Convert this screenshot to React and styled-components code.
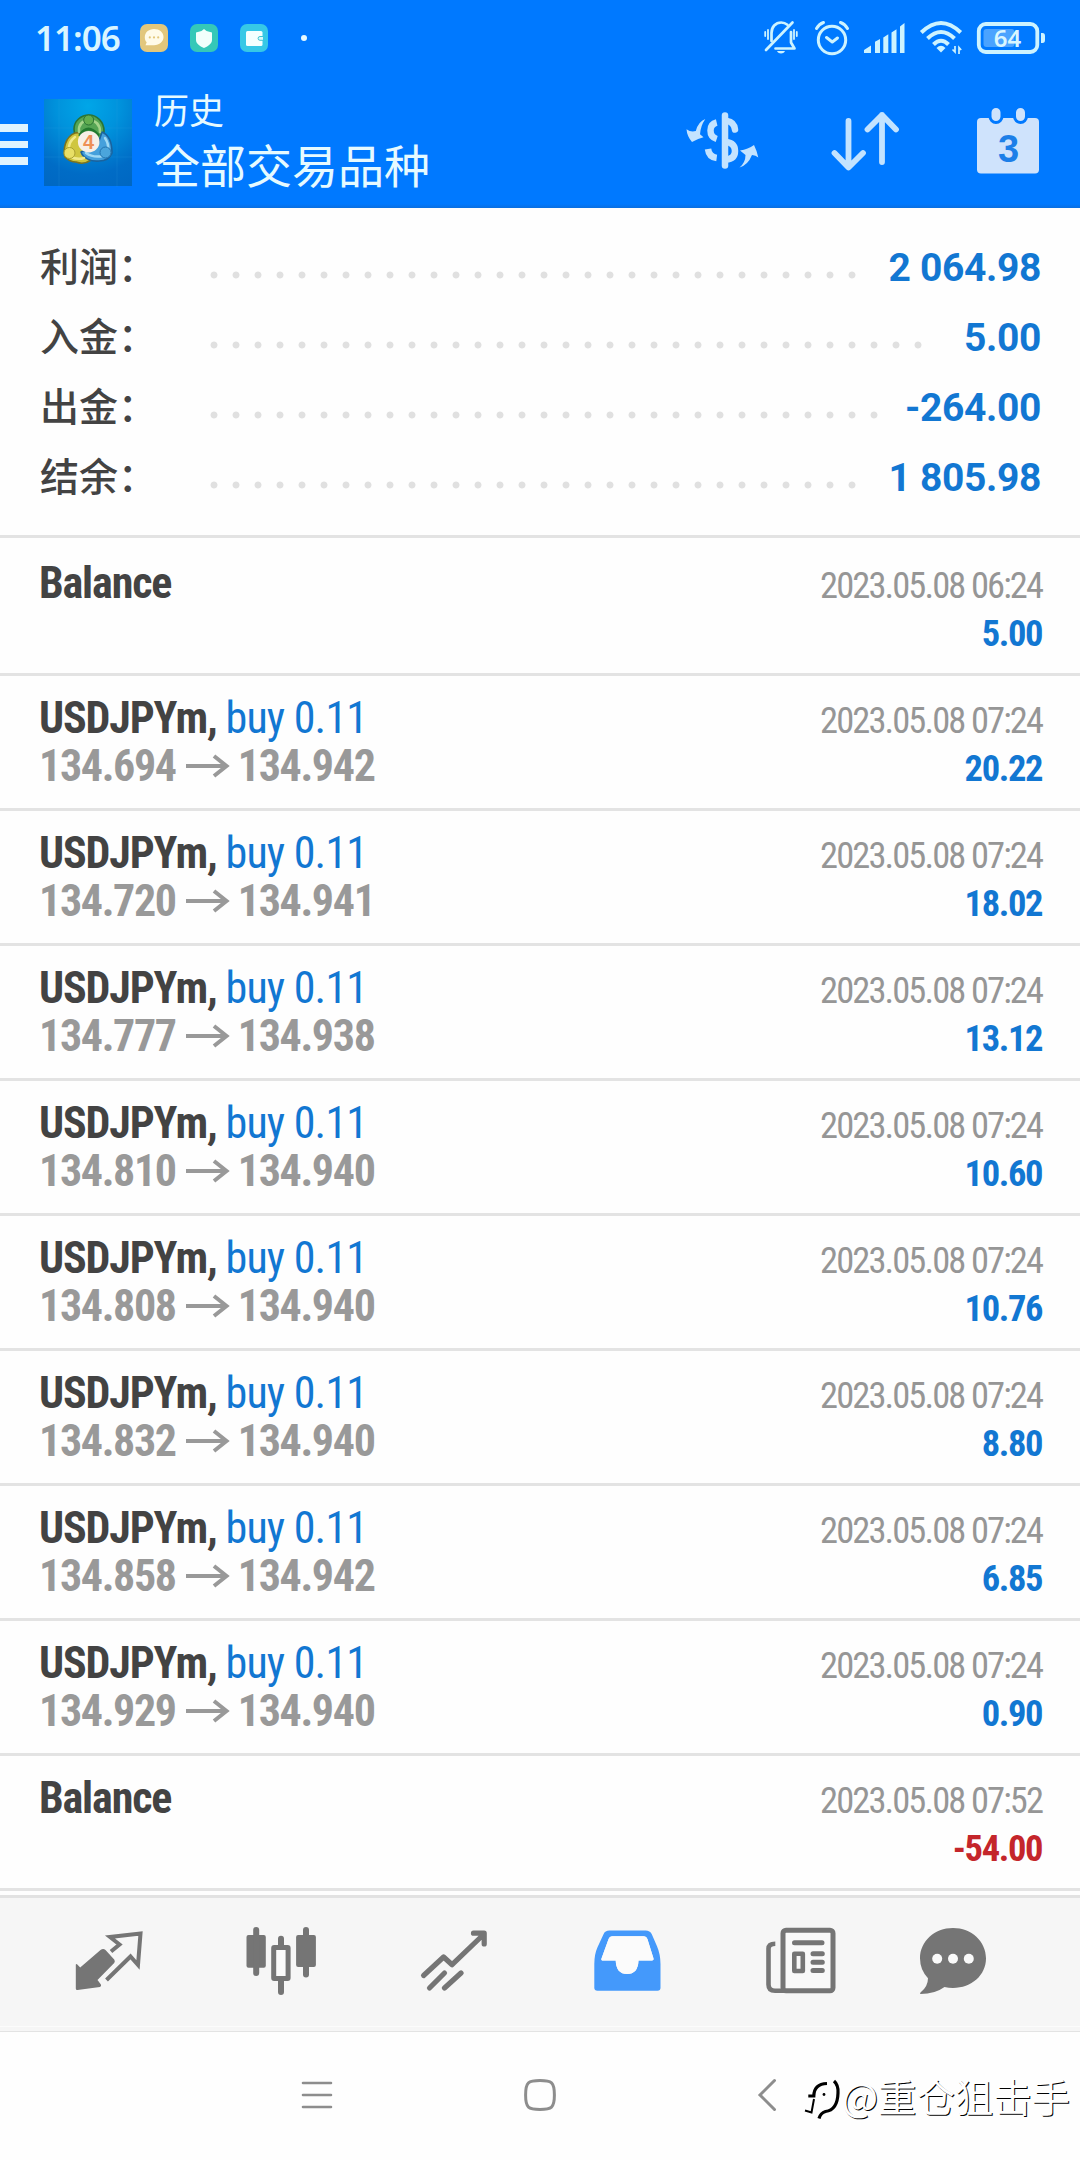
import React from 'react';
import styled, { createGlobalStyle, css } from 'styled-components';

const ROBOTO = "Roboto, 'Noto Sans CJK SC', sans-serif";
const CJK = "'Noto Sans CJK SC', sans-serif";

const Global = createGlobalStyle`
  * { box-sizing: border-box; }
  body { margin: 0; background: #fdfdfd; font-family: ${ROBOTO}; }
  svg { display: block; overflow: visible; flex: none; }
`;

const Screen = styled.div`
  position: relative;
  width: 1080px;
  height: 2160px;
  overflow: hidden;
  display: flex;
  flex-direction: column;
  background: #fefefe;
`;

const Header = styled.header`
  height: 208px;
  flex: none;
  background: linear-gradient(#0079ff 204px, #0a6fe0 208px);
  color: #e6faff;
`;

const StatusBar = styled.div`
  height: 76px;
  padding: 0 34px 0 35px;
  display: flex;
  align-items: center;
  justify-content: space-between;
`;

const Clock = styled.span`
  width: 105px;
  font: 600 35px/76px 'Noto Sans', sans-serif;
  letter-spacing: -1px;
  color: #d9f5ff;
  white-space: nowrap;
`;

const StatusGroup = styled.div`
  display: flex;
  align-items: center;
  gap: ${(p) => p.$gap || 0}px;
`;

const Badge = styled.span`
  width: 28px;
  height: 28px;
  border-radius: 7px;
  display: grid;
  place-items: center;
  background: ${(p) => p.$color};
`;

const MoreDot = styled.span`
  width: 6px;
  height: 6px;
  margin-left: 11px;
  border-radius: 50%;
  background: #e6faff;
`;

const AppBar = styled.div`
  height: 132px;
  display: flex;
  align-items: flex-start;
`;

const MenuButton = styled.div`
  width: 28px;
  margin: 48px 16px 0 0;
  display: flex;
  flex-direction: column;
  gap: 9px;
`;

const MenuBar = styled.span`
  height: 7.5px;
  background: #dff3ff;
`;

const Logo = styled.div`
  width: 88px;
  height: 87px;
  margin-top: 23px;
  background: radial-gradient(circle at 50% 8%, #00a6e8 0, #0092dc 35%, #006cc6 75%, #0067c2 100%);
`;

const Titles = styled.div`
  margin: 10px 0 0 22px;
  display: flex;
  flex-direction: column;
  font-family: ${CJK};
  white-space: nowrap;
`;

const Title = styled.span`
  font-size: 35px;
  line-height: 46px;
`;

const Subtitle = styled.span`
  font-size: 46px;
  line-height: 63px;
`;

const Actions = styled.div`
  margin-left: auto;
  padding: 36px 41px 0 0;
  display: flex;
  align-items: flex-start;
  color: #c3e3ff;
  & > svg + svg { margin-left: 74px; }
  & > svg:last-child { margin: -4px 0 0 78px; }
`;

const Summary = styled.section`
  height: 330px;
  flex: none;
  padding: 25px 39px 0 40px;
  border-bottom: 3px solid #e3e3e3;
`;

const SummaryRow = styled.div`
  height: 70px;
  display: flex;
  align-items: center;
`;

const SummaryLabel = styled.span`
  width: 162.7px;
  padding-bottom: 8px;
  font: 500 39px/62px ${CJK};
  color: #434343;
  white-space: nowrap;
`;

const Leader = styled.span`
  flex: 1;
  height: 22px;
  margin: 13px 17px 0 0;
  &::before {
    content: '';
    display: block;
    height: 22px;
    width: round(down, 100%, 22px);
    background: radial-gradient(circle, #e0e0e0 3px, transparent 3.9px) 0 0 / 22px 22px repeat-x;
  }
`;

const SummaryValue = styled.span`
  font: 700 39px/70px ${ROBOTO};
  letter-spacing: -0.35px;
  color: #1277d2;
  white-space: pre;
`;

const Deals = styled.section`
  flex: none;
  padding-top: 3px;
`;

const Deal = styled.article`
  height: 135px;
  padding: 18px 38px 0 39px;
  display: flex;
  justify-content: space-between;
  border-bottom: 3px solid #e3e3e3;
`;

const DealSide = styled.div`
  display: flex;
  flex-direction: column;
  ${(p) =>
    p.$end &&
    css`
      align-items: flex-end;
      padding-top: 3px;
    `}
`;

const Line = styled.div`
  height: 48px;
  display: flex;
  align-items: center;
  font: ${(p) => p.$weight || 700} ${(p) => p.$size || 44}px/48px ${ROBOTO};
  font-stretch: 75%;
  letter-spacing: ${(p) => p.$tracking || -1.15}px;
  color: ${(p) => p.$color || '#434343'};
  white-space: pre;
`;

const Side = styled.span`
  font-weight: 400;
  letter-spacing: -0.8px;
  color: #1277d2;
`;

const ArrowSlot = styled.span`
  width: 62px;
  padding-left: 1px;
  display: grid;
  place-items: center;
`;

const TabBar = styled.nav`
  height: 132px;
  margin-top: 4px;
  flex: none;
  padding: 0 0 0 22px;
  display: flex;
  border-top: 3px solid #e2e2e2;
  border-bottom: 1px solid #fcfcfc;
  background: #f6f6f6;
`;

const Tab = styled.div`
  width: ${(p) => p.$width || 173}px;
  height: 126px;
  display: grid;
  place-items: center;
  color: ${(p) => (p.$active ? '#4499fb' : '#757575')};
`;

const SystemBar = styled.footer`
  height: 133px;
  flex: none;
  display: flex;
  align-items: center;
  padding: 0 0 2px 302px;
  border-top: 4px solid #f6f6f6;
  box-shadow: inset 0 1px #e3e3e3;
  color: #8d8d8d;
`;

const SystemKey = styled.div`
  margin-right: ${(p) => p.$gap || 0}px;
`;

const Watermark = styled.div`
  position: absolute;
  right: 10px;
  bottom: 37px;
  display: flex;
  align-items: center;
  gap: 2px;
  font: 400 38.4px/56px ${CJK};
  color: #fff;
  text-shadow: 1px 1px 0 #000;
  white-space: nowrap;
  & > svg { margin-top: 12px; }
`;

const ChatBadgeIcon = () => (
  <svg width="20" height="18" viewBox="0 0 20 18">
    <path d="M10 0c5.500 0 9.500 3.400 9.500 8s-4 8.200-9.500 8.200H1.500l1.200-3C1.300 11.800.8 10 .8 8.200.8 3.600 4.600 0 10 0z" fill="#fffbe8" />
    <g fill="#e2c77c"><circle cx="5.800" cy="8.400" r="1.100" /><circle cx="10" cy="8.400" r="1.100" /><circle cx="14.200" cy="8.400" r="1.100" /></g>
  </svg>
);

const ShieldBadgeIcon = () => (
  <svg width="16" height="19" viewBox="0 0 16 19">
    <path d="M8 0l2.500 2L16 3.500V11c0 3.500-3.500 6-8 8-4.500-2-8-4.500-8-8V3.500L5.500 2z" fill="#f1fffc" />
  </svg>
);

const WalletBadgeIcon = () => (
  <svg width="17" height="15" viewBox="0 0 17 15">
    <rect width="16.500" height="15" rx="1.500" fill="#f4ffff" />
    <path d="M17 5.500h-3a1.900 1.900 0 0 0 0 3.800h3" fill="#d8f8fb" stroke="#3fc4d2" strokeWidth="1" />
  </svg>
);

const MutedBellIcon = () => (
  <svg width="36" height="34" viewBox="0 0 36 34" fill="none" stroke="#cdf3ff" strokeWidth="2.700" strokeLinecap="round" strokeLinejoin="round">
    <path d="M7.500 20V12c0-6 4-10.500 9.700-10.500 2.500 0 4.500.8 6.200 2.200" />
    <path d="M11.500 27.500h19l-3.500-6V11" />
    <path d="M2 29L28.500 1.500" />
    <path d="M1.200 11v4M4 9v9M30 9v9M32.800 11v4" strokeWidth="1.800" />
    <path d="M13 30h8c-1 1.800-2.300 2.500-4 2.500s-3-.7-4-2.500z" fill="#cdf3ff" stroke="none" />
  </svg>
);

const AlarmIcon = () => (
  <svg width="34" height="34" viewBox="0 0 34 34" fill="none" stroke="#cdf3ff" strokeWidth="3" strokeLinecap="round" strokeLinejoin="round">
    <circle cx="17" cy="19" r="13.700" />
    <path d="M11.500 16.500l5.800 4.500 5.200-4M1.500 7.500Q4 3 8.500 1.500M32.500 7.500Q30 3 25.500 1.500" />
  </svg>
);

const SignalIcon = () => (
  <svg width="41" height="30" viewBox="0 0 41 30" fill="#cdf3ff">
    <path d="M0 30v-3l7-4.500V30zM11 30V18.800l5-2.900V30zM19.300 30V14.500l5-3.200V30zM27.500 30V9.500l5-3.200V30zM36 30V3.500L40.500 0v30z" />
  </svg>
);

const WifiIcon = () => (
  <svg width="42" height="34" viewBox="0 0 42 34" fill="none" stroke="#cdf3ff" strokeWidth="4">
    <path d="M1.300 11.500Q21-7.500 40.700 11.500M7.500 17.500Q21 4.500 34.500 17.500M13.500 23.500q7.500-7.500 15 0" />
    <path d="M16.500 27q4.500-4.500 9 0L21 31.500z" fill="#cdf3ff" stroke="none" />
    <path d="M35 25v6l-2.500-2.500M39 33v-6.500l2.200 2.500" strokeWidth="1.700" />
  </svg>
);

const BatteryIcon = () => (
  <svg width="69" height="32" viewBox="0 0 69 32">
    <rect x="1.800" y="2" width="58.500" height="28" rx="7" fill="none" stroke="#cdf3ff" strokeWidth="3.800" />
    <rect x="6.500" y="7" width="31" height="18" rx="3" fill="#4ba3ff" />
    <path d="M64 11h1.500q2.500 0 2.500 3v4q0 3-2.500 3H64z" fill="#cdf3ff" />
    <text x="30.500" y="24.500" textAnchor="middle" fontFamily="Noto Sans, sans-serif" fontWeight="600" fontSize="24" fill="#d9f6ff">64</text>
  </svg>
);

const TradingLogo = () => (
  <svg width="88" height="88" viewBox="0 0 88 88">
    <path d="M0 29h88M0 58h88M15 0v88M73 0v88" stroke="#38a6df" strokeOpacity=".16" />
    <g strokeLinejoin="round" strokeWidth="1.600">
      <path d="M45 16c8 0 15 7 15 16 0 6-3 10-6 12L37 43c-4-3-7-7-7-13 0-8 7-14 15-14z" fill="#55a554" stroke="#2a7434" />
      <path d="M31 34c4-1 7 0 9 3l7 24c-4 3-10 4-15 2-3 0-8-2-11-5-2-8 0-20 10-24z" fill="#cfc63f" stroke="#7b7420" />
      <path d="M58 33c7 3 10 11 10 21-2 5-7 8-13 8-8 1-16-3-18-9l17-8z" fill="#45a0dc" stroke="#1a639e" />
    </g>
    <g fill="none" strokeLinecap="round" strokeWidth="2.500">
      <path d="M35 33q-1-11 10-12 11 1 11 12" stroke="#a4d48a" />
      <path d="M31 38q-7 5-6 13M27 58q7 3 13 1" stroke="#f0e98a" />
      <path d="M61 39q4 6 3 12M59 57q-10 2-17-3" stroke="#9fd9f5" />
      <path d="M36 36q8-12 18 0" stroke="#23792f" strokeWidth="3" />
    </g>
    <circle cx="44.700" cy="21" r="5" fill="#62ae50" stroke="#2b7336" />
    <circle cx="25.500" cy="54" r="5.500" fill="#e8df66" stroke="#aaa030" />
    <circle cx="61.500" cy="53.500" r="5.500" fill="#4ba5dc" stroke="#2374b0" />
    <circle cx="44.700" cy="42.700" r="10.800" fill="#f7efe6" />
    <text x="44.500" y="50" textAnchor="middle" fontFamily="Liberation Sans, sans-serif" fontWeight="700" fontSize="20" fill="#ee8f55">4</text>
  </svg>
);

const CurrencyIcon = () => (
  <svg width="72" height="57" viewBox="0 0 72 57">
    <g fill="none" stroke="currentColor" strokeWidth="6.500">
      <path d="M39 3.500v50" strokeLinecap="round" />
      <path d="M30.700 10.500Q24.500 12 24.500 18.500T30.700 27" />
      <path d="M22 37q1 8 8.700 9" />
      <path d="M41 9q7 1 8 8.500" strokeLinecap="round" />
      <path d="M40 30q9 1 9 9t-9 8.500" />
    </g>
    <path d="M19.300 7q-7 2.500-9.500 12Q5 20.500.5 17.300q.5 7 5.500 12.700 5-3 11.500-4.700l-3.500-3Q14.500 14 19.300 7zM53.500 55.500q6-5 6-12.500l-5.500-4.500q8-1.200 14-5.500 3 6 4.300 12.500-2.500-2.500-6.300-2.500-4 10-12.500 12.500z" fill="currentColor" />
  </svg>
);

const SortIcon = () => (
  <svg width="67" height="60" viewBox="0 0 67 60" fill="none" stroke="currentColor" strokeWidth="5.800" strokeLinecap="round" strokeLinejoin="round">
    <path d="M16.500 9v46M2.500 41l14 14.500L31 41M50 50V3M35.500 17.500L50 3l14 14.500" />
  </svg>
);

const CalendarIcon = () => (
  <svg width="62" height="66" viewBox="0 0 62 66">
    <rect y="10" width="62" height="55.500" rx="4" fill="#cfe3fc" />
    <g fill="#cfe3fc" stroke="#0079ff" strokeWidth="3">
      <rect x="13" y="-1.500" width="12" height="16" rx="6" />
      <rect x="37.500" y="-1.500" width="12" height="16" rx="6" />
    </g>
    <text x="31.500" y="53.500" textAnchor="middle" fontFamily="Liberation Sans, sans-serif" fontWeight="700" fontSize="38" fill="#1d7fe8">3</text>
  </svg>
);

const PriceArrow = () => (
  <svg width="43" height="22" viewBox="0 0 43 22" fill="none" stroke="currentColor" strokeWidth="4">
    <path d="M0 11h41M28 1l12.500 10L28 21" />
  </svg>
);

const QuotesIcon = () => (
  <svg width="68" height="62" viewBox="0 0 68 62">
    <path d="M.8 35q0-1.500 1.500-.500L5.200 37.500 25.500 20q2.800-2 5 0l8.700 9.500q1.300 1.800 0 3.500L22.500 50l3.400 4.500q.8 1.800-1 2.500L2.500 60Q.8 60.200.8 58.500z" fill="currentColor" />
    <path d="M36 21.500l8.500-7L35 7l30.500-3.500L63 35l-7.500-8.500-24 23.500" fill="none" stroke="currentColor" strokeWidth="4" />
  </svg>
);

const CandlesIcon = () => (
  <svg width="70" height="68" viewBox="1 0 70 68" fill="currentColor">
    <rect x=".5" y="8" width="19.300" height="32.700" rx="2" />
    <rect x="7.200" width="6" height="49" rx="3" />
    <rect x="27.700" y="20.500" width="14.400" height="31" rx=".5" fill="#fafafa" stroke="currentColor" strokeWidth="5" strokeLinejoin="round" />
    <path d="M35 11.700v7M35 54v11" fill="none" stroke="currentColor" strokeWidth="6" strokeLinecap="round" />
    <rect x="50.100" y="8" width="19.800" height="32" rx="2" />
    <rect x="57" width="6" height="50.500" rx="3" />
  </svg>
);

const TrendIcon = () => (
  <svg width="68" height="62" viewBox="1 0 68 62" fill="none" stroke="currentColor" strokeWidth="5.200" strokeLinecap="round" strokeLinejoin="round">
    <path d="M3.600 45.500l20-18.500 8.500 7.700L63 5M53.500 3.200h10.700V14M9.500 58l15-15M24.500 58l16.500-15" />
  </svg>
);

const InboxIcon = () => (
  <svg width="67" height="61" viewBox="0 .7 67 61">
    <path fill="currentColor" fillRule="evenodd" d="M.3 34Q.3 24 3.500 17L9.500 4Q11 .3 15.500.3h36q4.500 0 6.300 3.700L63 16q3.500 8 3.500 18v23.500q0 3-3 3h-60q-3.200 0-3.200-3zM7.500 28.300q-.7 2 1.500 2h12.700q.5 13.500 11.400 13.500T44.500 30.300H58q2 0 1.500-2L53.500 9q-1-3-4-3H18.500q-3 0-4 3z" />
    <path fill="#fbfbfb" d="M7.500 28.300q-.7 2 1.500 2h12.700q.5 13.500 11.400 13.500T44.500 30.300H58q2 0 1.500-2L53.500 9q-1-3-4-3H18.500q-3 0-4 3z" />
  </svg>
);

const NewsIcon = () => (
  <svg width="70" height="66" viewBox="0 .5 70 66" fill="none" stroke="currentColor" strokeWidth="5">
    <rect x="17" y="2.700" width="50" height="60.600" rx="3" fill="#f9f9f9" />
    <path d="M9.300 16.300q-6.800 0-6.800 5V57q0 6.200 6.500 6.200h9" strokeWidth="4.600" />
    <path d="M28.500 15.300h27.500M47 26.300h9.300M47 34.700h9.300M47 43h9.300" strokeLinecap="round" />
    <rect x="28.300" y="26.300" width="8.500" height="17.200" strokeWidth="4.600" strokeLinejoin="round" />
  </svg>
);

const ChatIcon = () => (
  <svg width="66" height="66" viewBox="0 0 66 66">
    <path fill="currentColor" d="M33 0c18.500 0 33 13.300 33 30.300S51.500 60 33 60q-4.500 0-8.500-1Q15 66 .5 66q-1-.5 0-1.500 7.500-6 7.500-14.300Q0 42 0 30.300C0 13.300 14.500 0 33 0z" />
    <g fill="#fafafa"><circle cx="17.200" cy="30.700" r="5" /><circle cx="33" cy="30.700" r="5" /><circle cx="48.800" cy="30.700" r="5" /></g>
  </svg>
);

const RecentsKey = () => (
  <svg width="30" height="28" viewBox="0 0 30 28" stroke="currentColor" strokeWidth="2.600" strokeLinecap="round">
    <path d="M1 2h28M1 14h28M1 26h28" />
  </svg>
);

const HomeKey = () => (
  <svg width="32" height="32" viewBox="0 0 32 32" fill="none" stroke="currentColor" strokeWidth="3">
    <path d="M16 1.600c11.500 0 14.400 1.400 14.400 14.400S27.500 30.400 16 30.400 1.600 29 1.600 16 4.500 1.600 16 1.600z" />
  </svg>
);

const BackKey = () => (
  <svg width="18" height="32" viewBox="0 0 18 32" fill="none" stroke="currentColor" strokeWidth="3" strokeLinecap="round">
    <path d="M16.500 1.500L2 16l14.500 14.500" />
  </svg>
);

const WatermarkLogo = () => (
  <svg width="35" height="38" viewBox="0 0 35 38" fill="none" stroke="#000" strokeWidth="3.200">
    <path d="M0 28.500l6.500 2L9 17" strokeWidth="2" />
    <path d="M3.300 14h5.500Q9 2 22 1.500" />
    <path d="M29-1q4.500 4 4 12-.5 17-12.500 18.500-5 1.500-6.500 7" />
    <circle cx="19" cy="12.500" r="1.400" fill="#000" stroke="none" />
  </svg>
);

const totals = [
  ['利润：', '2 064.98'],
  ['入金：', '5.00'],
  ['出金：', '-264.00'],
  ['结余：', '1 805.98'],
];

const deals = [
  { time: '2023.05.08 06:24', profit: '5.00' },
  { open: '134.694', close: '134.942', profit: '20.22' },
  { open: '134.720', close: '134.941', profit: '18.02' },
  { open: '134.777', close: '134.938', profit: '13.12' },
  { open: '134.810', close: '134.940', profit: '10.60' },
  { open: '134.808', close: '134.940', profit: '10.76' },
  { open: '134.832', close: '134.940', profit: '8.80' },
  { open: '134.858', close: '134.942', profit: '6.85' },
  { open: '134.929', close: '134.940', profit: '0.90' },
  { time: '2023.05.08 07:52', profit: '-54.00' },
];

function DealRow({ open, close, profit, time = '2023.05.08 07:24' }) {
  return (
    <Deal>
      <DealSide>
        {open ? (
          <>
            <Line>USDJPYm, <Side>buy 0.11</Side></Line>
            <Line $tracking={-1.35} $color="#999999">{open}<ArrowSlot><PriceArrow /></ArrowSlot>{close}</Line>
          </>
        ) : (
          <Line>Balance</Line>
        )}
      </DealSide>
      <DealSide $end>
        <Line $weight={400} $size={36.5} $tracking={-1.9} $color="#969696">{time}</Line>
        <Line $size={36.5} $tracking={-1.4} $color={profit.startsWith('-') ? '#c4262b' : '#1277d2'}>{profit}</Line>
      </DealSide>
    </Deal>
  );
}

export default function App() {
  return (
    <Screen>
      <Global />
      <Header>
        <StatusBar>
          <StatusGroup>
            <Clock>11:06</Clock>
            <StatusGroup $gap={22}>
              <Badge $color="#e2c77c"><ChatBadgeIcon /></Badge>
              <Badge $color="#35c8b8"><ShieldBadgeIcon /></Badge>
              <Badge $color="#36c8e6"><WalletBadgeIcon /></Badge>
              <MoreDot />
            </StatusGroup>
          </StatusGroup>
          <StatusGroup $gap={15}>
            <MutedBellIcon />
            <AlarmIcon />
            <SignalIcon />
            <WifiIcon />
            <BatteryIcon />
          </StatusGroup>
        </StatusBar>
        <AppBar>
          <MenuButton><MenuBar /><MenuBar /><MenuBar /></MenuButton>
          <Logo><TradingLogo /></Logo>
          <Titles>
            <Title>历史</Title>
            <Subtitle>全部交易品种</Subtitle>
          </Titles>
          <Actions>
            <CurrencyIcon />
            <SortIcon />
            <CalendarIcon />
          </Actions>
        </AppBar>
      </Header>
      <Summary>
        {totals.map(([label, value]) => (
          <SummaryRow key={label}>
            <SummaryLabel>{label}</SummaryLabel>
            <Leader />
            <SummaryValue>{value}</SummaryValue>
          </SummaryRow>
        ))}
      </Summary>
      <Deals>
        {deals.map((deal, i) => (
          <DealRow key={i} {...deal} />
        ))}
      </Deals>
      <TabBar>
        <Tab><QuotesIcon /></Tab>
        <Tab><CandlesIcon /></Tab>
        <Tab><TrendIcon /></Tab>
        <Tab $active><InboxIcon /></Tab>
        <Tab><NewsIcon /></Tab>
        <Tab $width={131}><ChatIcon /></Tab>
      </TabBar>
      <SystemBar>
        <SystemKey $gap={192}><RecentsKey /></SystemKey>
        <SystemKey $gap={202}><HomeKey /></SystemKey>
        <SystemKey><BackKey /></SystemKey>
      </SystemBar>
      <Watermark>
        <WatermarkLogo />
        <span>@重仓狙击手</span>
      </Watermark>
    </Screen>
  );
}
